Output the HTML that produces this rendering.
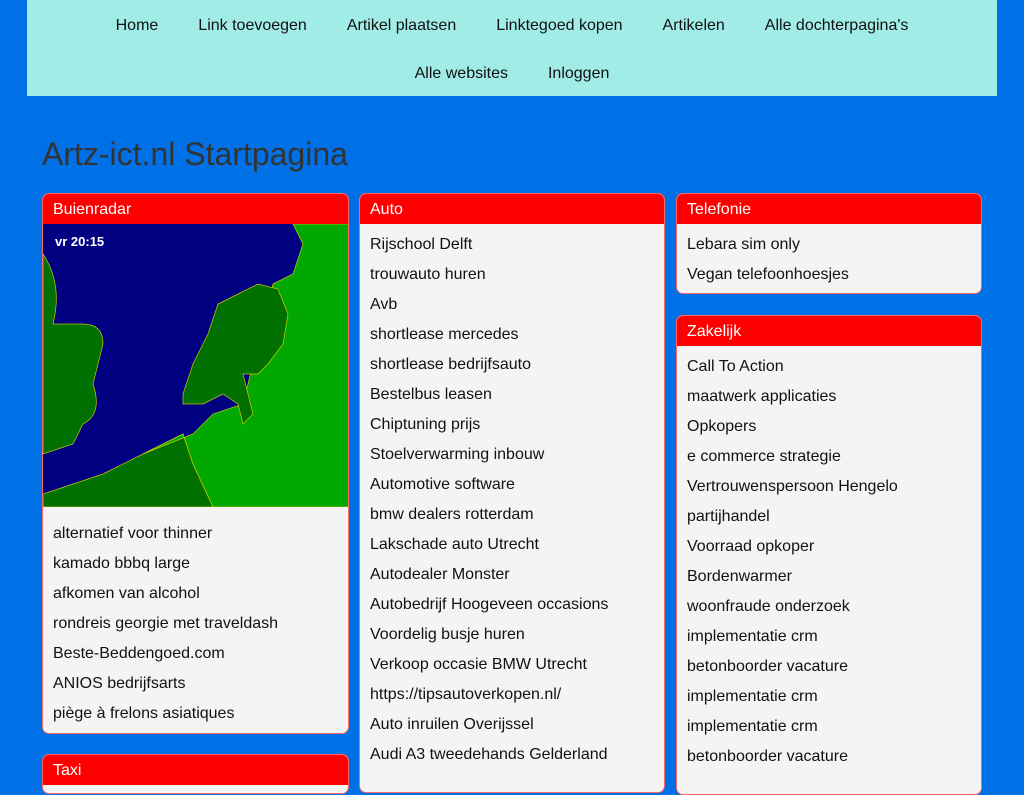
<!DOCTYPE html>
<html><head><meta charset="utf-8"><style>
*{box-sizing:border-box;margin:0;padding:0}
body{width:1024px;height:768px;overflow:hidden;background:#0070e6;font-family:"Liberation Sans",Arial,sans-serif;}
nav{position:absolute;left:27px;top:0;width:970px;height:96px;background:#a1ece6;display:flex;flex-wrap:wrap;justify-content:center;padding:2px 40px 0}
nav a{display:block;height:48px;line-height:48px;padding:0 20px;color:#111;font-size:16px;text-decoration:none}
h1{position:absolute;left:42px;top:136px;font-size:32px;font-weight:normal;color:#333}
.box{position:absolute;border:1px solid #f66;border-radius:7px;background:#f4f4f4;overflow:hidden}
.box h2{background:#ff0000;color:#fff;font-size:16px;font-weight:normal;height:30px;line-height:32px;padding-left:10px}
.box ul{list-style:none;padding:6px 10px 0}
.box li{height:30px;line-height:30px;font-size:16px;color:#111;white-space:nowrap}
</style></head><body>
<nav><a>Home</a><a>Link toevoegen</a><a>Artikel plaatsen</a><a>Linktegoed kopen</a><a>Artikelen</a><a>Alle dochterpagina's</a><a>Alle websites</a><a>Inloggen</a></nav>
<h1>Artz-ict.nl Startpagina</h1>

<div class="box" style="left:42px;top:193px;width:307px;height:541px">
<h2>Buienradar</h2>
<svg width="307" height="283" viewBox="0 0 307 283" style="display:block">
<rect width="307" height="283" fill="#000080"/>
<path d="M0,30 Q20,60 10,100 L40,100 Q60,100 60,120 L50,160 Q60,190 40,200 L30,220 L0,230 Z" fill="#007000" stroke="#cc0" stroke-width="0.7"/>
<path d="M0,270 L60,250 L100,230 L140,210 L150,240 L170,283 L0,283 Z" fill="#007000" stroke="#cc0" stroke-width="0.7"/>
<path d="M100,230 L150,210 L170,190 L200,180 L230,60 L250,50 L260,20 L250,0 L307,0 L307,283 L170,283 L150,240 L140,210 Z" fill="#00a800" stroke="#cc0" stroke-width="0.7"/>
<path d="M140,170 L150,140 L165,110 L175,80 L195,70 L215,60 L235,65 L245,90 L240,120 L225,140 L215,150 L200,150 L210,190 L200,200 L195,180 L180,170 L160,180 L140,180 Z" fill="#007000" stroke="#cc0" stroke-width="0.7"/>
<text x="12" y="22" fill="#fff" font-size="13" font-weight="bold" font-family="Liberation Sans,sans-serif">vr 20:15</text>
</svg>
<ul style="padding-top:12px"><li>alternatief voor thinner</li><li>kamado bbbq large</li><li>afkomen van alcohol</li><li>rondreis georgie met traveldash</li><li>Beste-Beddengoed.com</li><li>ANIOS bedrijfsarts</li><li>piège à frelons asiatiques</li></ul>
</div>
<div class="box" style="left:42px;top:754px;width:307px;height:40px"><h2>Taxi</h2></div>

<div class="box" style="left:359px;top:193px;width:306px;height:600px">
<h2>Auto</h2>
<ul><li>Rijschool Delft</li><li>trouwauto huren</li><li>Avb</li><li>shortlease mercedes</li><li>shortlease bedrijfsauto</li><li>Bestelbus leasen</li><li>Chiptuning prijs</li><li>Stoelverwarming inbouw</li><li>Automotive software</li><li>bmw dealers rotterdam</li><li>Lakschade auto Utrecht</li><li>Autodealer Monster</li><li>Autobedrijf Hoogeveen occasions</li><li>Voordelig busje huren</li><li>Verkoop occasie BMW Utrecht</li><li>https://tipsautoverkopen.nl/</li><li>Auto inruilen Overijssel</li><li>Audi A3 tweedehands Gelderland</li></ul>
</div>

<div class="box" style="left:676px;top:193px;width:306px;height:101px">
<h2>Telefonie</h2>
<ul><li>Lebara sim only</li><li>Vegan telefoonhoesjes</li></ul>
</div>
<div class="box" style="left:676px;top:315px;width:306px;height:480px">
<h2>Zakelijk</h2>
<ul><li>Call To Action</li><li>maatwerk applicaties</li><li>Opkopers</li><li>e commerce strategie</li><li>Vertrouwenspersoon Hengelo</li><li>partijhandel</li><li>Voorraad opkoper</li><li>Bordenwarmer</li><li>woonfraude onderzoek</li><li>implementatie crm</li><li>betonboorder vacature</li><li>implementatie crm</li><li>implementatie crm</li><li>betonboorder vacature</li></ul>
</div>
</body></html>
